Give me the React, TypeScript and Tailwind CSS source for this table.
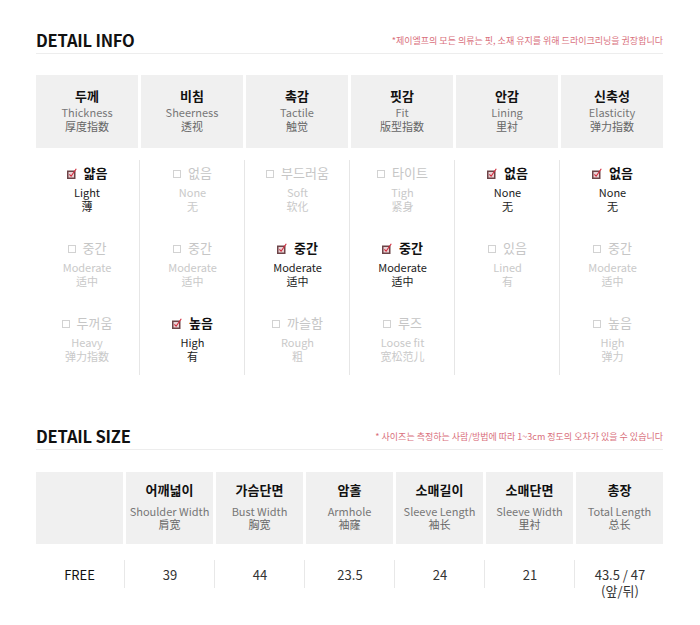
import React from "react";

type Item = { ko: string; en: string; zh: string; on?: boolean };
type Col = { ko: string; en: string; zh: string; items: Item[] };

const info: Col[] = [
  {
    ko: "두께", en: "Thickness", zh: "厚度指数",
    items: [
      { ko: "얇음", en: "Light", zh: "薄", on: true },
      { ko: "중간", en: "Moderate", zh: "适中" },
      { ko: "두꺼움", en: "Heavy", zh: "弹力指数" },
    ],
  },
  {
    ko: "비침", en: "Sheerness", zh: "透视",
    items: [
      { ko: "없음", en: "None", zh: "无" },
      { ko: "중간", en: "Moderate", zh: "适中" },
      { ko: "높음", en: "High", zh: "有", on: true },
    ],
  },
  {
    ko: "촉감", en: "Tactile", zh: "触觉",
    items: [
      { ko: "부드러움", en: "Soft", zh: "软化" },
      { ko: "중간", en: "Moderate", zh: "适中", on: true },
      { ko: "까슬함", en: "Rough", zh: "粗" },
    ],
  },
  {
    ko: "핏감", en: "Fit", zh: "版型指数",
    items: [
      { ko: "타이트", en: "Tigh", zh: "紧身" },
      { ko: "중간", en: "Moderate", zh: "适中", on: true },
      { ko: "루즈", en: "Loose fit", zh: "宽松范儿" },
    ],
  },
  {
    ko: "안감", en: "Lining", zh: "里衬",
    items: [
      { ko: "없음", en: "None", zh: "无", on: true },
      { ko: "있음", en: "Lined", zh: "有" },
    ],
  },
  {
    ko: "신축성", en: "Elasticity", zh: "弹力指数",
    items: [
      { ko: "없음", en: "None", zh: "无", on: true },
      { ko: "중간", en: "Moderate", zh: "适中" },
      { ko: "높음", en: "High", zh: "弹力" },
    ],
  },
];

const sizes = [
  { ko: "어깨넓이", en: "Shoulder Width", zh: "肩宽", v: ["39"] },
  { ko: "가슴단면", en: "Bust Width", zh: "胸宽", v: ["44"] },
  { ko: "암홀", en: "Armhole", zh: "袖窿", v: ["23.5"] },
  { ko: "소매길이", en: "Sleeve Length", zh: "袖长", v: ["24"] },
  { ko: "소매단면", en: "Sleeve Width", zh: "里衬", v: ["21"] },
  { ko: "총장", en: "Total Length", zh: "总长", v: ["43.5 / 47", "(앞/뒤)"] },
];

function CheckOn() {
  return (
    <svg width="10" height="11" viewBox="0 0 10 11" className="shrink-0">
      <rect x="0.75" y="3.25" width="7" height="7" fill="#ead3d6" stroke="#6d4448" strokeWidth="1.5" />
      <path d="M2.4 6.4 L4.1 8.2 L9.3 0.8" fill="none" stroke="#d2283a" strokeWidth="1.1" />
    </svg>
  );
}

function CheckOff() {
  return <span className="inline-block w-[8px] h-[8px] border border-[#d2d2d2] shrink-0 mt-[2px]" />;
}

function SectionTitle({ title, note }: { title: string; note: string }) {
  return (
    <div className="flex items-center justify-between border-b border-[#ededed] pb-[3px]">
      <div className="text-[16.5px] leading-[20px] font-bold text-[#111] tracking-[-0.2px]">{title}</div>
      <div className="text-[9px] leading-[12px] text-[#d96f7c] mt-[2px]">{note}</div>
    </div>
  );
}

export default function App() {
  return (
    <div className="w-[700px] h-[625px] bg-white font-['Noto_Sans_CJK_KR','Noto_Sans',sans-serif]">
      <div className="ml-[36px] w-[627px] pt-[30px]">
        <SectionTitle
          title="DETAIL INFO"
          note="*제이엘프의 모든 의류는 핏, 소재 유지를 위해 드라이크리닝을 권장합니다"
        />
        <div className="grid grid-cols-6 gap-x-[3px] mt-[21px]">
          {info.map((c) => (
            <div key={c.ko} className="h-[73px] bg-[#f0f0f0] pt-[12px] flex flex-col items-center">
              <div className="text-[13px] leading-[18px] font-bold text-[#111]">{c.ko}</div>
              <div className="text-[11px] leading-[14px] text-[#777]">{c.en}</div>
              <div className="text-[11px] leading-[14px] text-[#666]">{c.zh}</div>
            </div>
          ))}
        </div>
        <div className="grid grid-cols-6 gap-x-[3px] mt-[12px]">
          {info.map((c, i) => (
            <div
              key={c.ko}
              className={`h-[215px] pt-[3px] flex flex-col gap-[25px] ${i > 0 ? "border-l border-[#e6e6e6] -ml-[2px] pl-[2px]" : ""}`}
            >
              {c.items.map((it) => (
                <div key={it.ko + it.en} className="h-[50px] flex flex-col items-center">
                  <div className="flex items-center gap-[7px] h-[20px] mb-[2px]">
                    {it.on ? <CheckOn /> : <CheckOff />}
                    <span
                      className={`text-[13px] leading-[20px] ${it.on ? "font-bold text-[#111]" : "text-[#c6c6c6]"}`}
                    >
                      {it.ko}
                    </span>
                  </div>
                  <div className={`text-[11px] leading-[14px] ${it.on ? "text-[#222]" : "text-[#c9c9c9]"}`}>{it.en}</div>
                  <div className={`text-[11px] leading-[14px] ${it.on ? "text-[#222]" : "text-[#c9c9c9]"}`}>{it.zh}</div>
                </div>
              ))}
            </div>
          ))}
        </div>

        <div className="mt-[51px]">
          <SectionTitle
            title="DETAIL SIZE"
            note="* 사이즈는 측정하는 사람/방법에 따라 1~3cm 정도의 오차가 있을 수 있습니다"
          />
        </div>
        <div className="grid grid-cols-7 gap-x-[3px] mt-[22px]">
          <div className="h-[72px] bg-[#f0f0f0]" />
          {sizes.map((s) => (
            <div key={s.ko} className="h-[72px] bg-[#f0f0f0] pt-[9px] flex flex-col items-center">
              <div className="text-[13px] leading-[18px] font-bold text-[#111] mb-[5px]">{s.ko}</div>
              <div className="text-[11px] leading-[14px] text-[#777] whitespace-nowrap">{s.en}</div>
              <div className="text-[11px] leading-[13px] text-[#666]">{s.zh}</div>
            </div>
          ))}
        </div>
        <div className="grid grid-cols-7 gap-x-[3px] mt-[16px]">
          <div className="h-[28px] pt-[7px] text-center text-[13px] leading-[16px] text-[#111]">FREE</div>
          {sizes.map((s) => (
            <div key={s.ko} className="h-[28px] border-l border-[#e8e8e8] -ml-[2px] pl-[2px] pt-[7px] flex flex-col items-center">
              {s.v.map((t) => (
                <div key={t} className="text-[13px] leading-[16px] text-[#333] whitespace-nowrap">{t}</div>
              ))}
            </div>
          ))}
        </div>
      </div>
    </div>
  );
}
